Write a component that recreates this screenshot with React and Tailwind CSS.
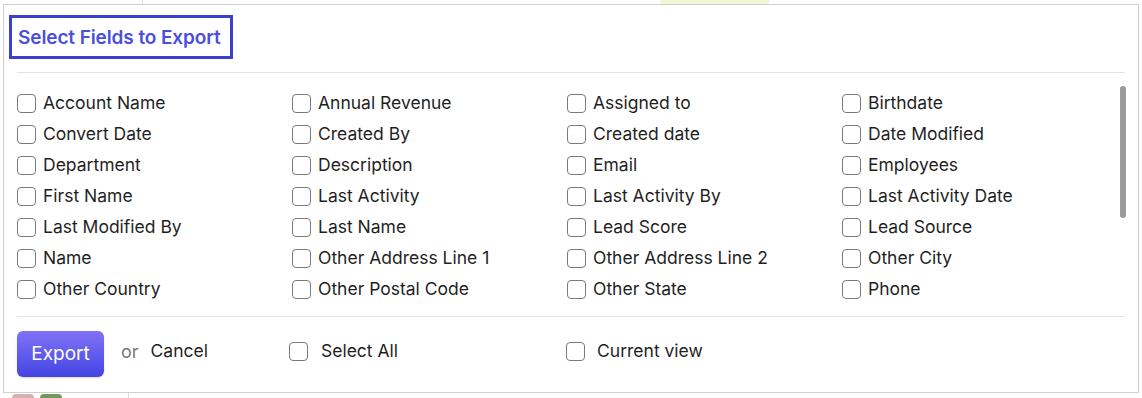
import React from "react";

const fields = [
  "Account Name", "Annual Revenue", "Assigned to", "Birthdate",
  "Convert Date", "Created By", "Created date", "Date Modified",
  "Department", "Description", "Email", "Employees",
  "First Name", "Last Activity", "Last Activity By", "Last Activity Date",
  "Last Modified By", "Last Name", "Lead Score", "Lead Source",
  "Name", "Other Address Line 1", "Other Address Line 2", "Other City",
  "Other Country", "Other Postal Code", "Other State", "Phone",
];

function Box() {
  return (
    <span className="w-[19px] h-[19px] shrink-0 rounded-[4px] border-[1.5px] border-[#7a7a7a] bg-white" />
  );
}

export default function App() {
  return (
    <div
      className="relative w-[1142px] h-[398px] overflow-hidden bg-white pt-[4px] pl-[3px]"
      style={{ fontFamily: "Inter, 'Noto Sans', sans-serif" }}
    >
      {/* hints of the page behind */}
      <div className="absolute left-[142px] top-0 h-[4px] w-px bg-[#dcdcdc]" />
      <div className="absolute left-[128px] top-[393px] h-[5px] w-px bg-[#dcdcdc]" />
      <div className="absolute left-[12px] top-[394px] h-[4px] w-[22px] rounded-t-full bg-[#d8b0b0]" />
      <div className="absolute left-[40px] top-[394px] h-[4px] w-[22px] rounded-t-full bg-[#6d9a5a]" />
      <div className="absolute left-[660px] top-0 h-[4px] w-[110px] rounded-b-full bg-[#f0f6d6]" />

      <div className="relative flex h-[389px] w-[1136px] flex-col border border-[#cfcfcf] bg-white">
        <div className="ml-[5px] mt-[10px] flex h-[44px] w-[224px] items-center border-[3px] border-[#3b3fd0] pl-[6px] pt-[2px]">
          <span className="text-[19px] font-semibold text-[#4a4fe0] tracking-[-0.1px]">
            Select Fields to Export
          </span>
        </div>

        <div className="mx-[13px] mt-[13px] h-px bg-[#e3e3e3]" />

        <div className="relative h-[243px] px-[13px] pt-[15px]">
          <div className="grid grid-cols-[repeat(4,275px)]">
            {fields.map((f) => (
              <div key={f} className="flex h-[31px] items-center gap-[7px]">
                <Box />
                <span className="text-[17.5px] text-[#1f1f1f] whitespace-nowrap">{f}</span>
              </div>
            ))}
          </div>
          <div className="absolute right-[12px] top-[13px] h-[132px] w-[6px] rounded-full bg-[#9b9b9b]" />
        </div>

        <div className="mx-[13px] h-px bg-[#e3e3e3]" />

        <div className="flex items-center px-[13px] pt-[14px]">
          <button className="h-[46px] w-[87px] rounded-[6px] bg-linear-to-b from-[#8272f6] to-[#4343e2] text-[19px] text-white shadow-[0_1px_2px_rgba(0,0,0,0.15)]">
            Export
          </button>
          <span className="mb-[6px] ml-[17px] text-[18px] text-[#777]">or</span>
          <span className="mb-[6px] ml-[12px] text-[17.5px] text-[#1f1f1f]">Cancel</span>
          <div className="mb-[6px] ml-[81px] flex items-center gap-[13px]">
            <Box />
            <span className="text-[17.5px] text-[#1f1f1f]">Select All</span>
          </div>
          <div className="mb-[6px] ml-[168px] flex items-center gap-[12px]">
            <Box />
            <span className="text-[17.5px] text-[#1f1f1f]">Current view</span>
          </div>
        </div>
      </div>
    </div>
  );
}
